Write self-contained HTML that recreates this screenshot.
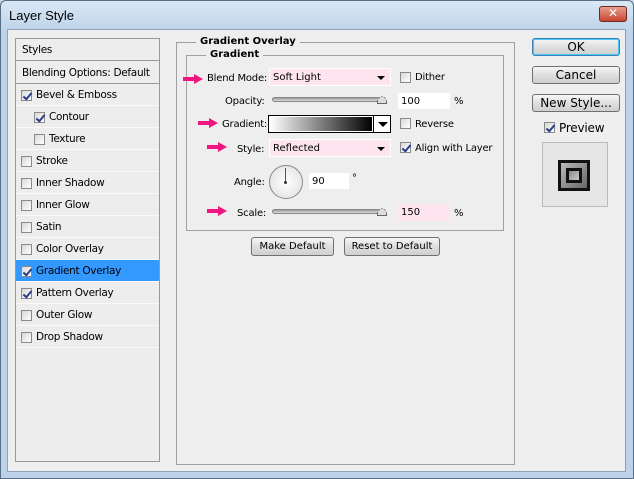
<!DOCTYPE html>
<html><head><style>
*{box-sizing:border-box;margin:0;padding:0}
body{width:634px;height:479px;overflow:hidden;font-family:Tahoma,"DejaVu Sans","Liberation Sans",sans-serif;font-size:11px;color:#000;background:#c4d8ea}
.win{position:absolute;left:0;top:0;width:634px;height:479px;background:linear-gradient(#dbe8f5,#bcd3ea 30px,#bcd3ea);border:1px solid #5a6f86;border-radius:6px 6px 0 0}
.title{position:absolute;left:8px;top:7px;font-size:13px;font-family:"Liberation Sans",sans-serif;color:#000}
.close{position:absolute;left:598px;top:5px;width:28px;height:16px;background:linear-gradient(#e8a08e,#c8452e);border:1px solid #6b2a20;border-radius:3px;color:#fff;font-weight:bold;text-align:center;line-height:13px;font-size:12px}
.content{position:absolute;left:7px;top:29px;width:619px;height:443px;background:#eeeeee;border:1px solid #8da2b9}
.abs{position:absolute}
.list{position:absolute;left:15px;top:38px;width:145px;height:424px;border:1px solid #999;background:#ededed}
.row{position:absolute;left:0;width:143px;height:22px;border-bottom:1px solid #fafafa;line-height:23px;font-size:10.5px;font-family:"DejaVu Sans",sans-serif;letter-spacing:-0.3px}
.cb{position:absolute;width:11px;height:11px;border:1px solid #8a8a8a;background:linear-gradient(135deg,#d8d8d8,#fff);top:6px}
.cb.on::after{content:"";position:absolute;left:3px;top:0px;width:3px;height:7px;border:solid #2a3c8a;border-width:0 2px 2px 0;transform:rotate(40deg)}
.sel{background:#3399ff}
.lbl{position:absolute;font-weight:bold;background:#eee;padding:0 4px;font-family:"DejaVu Sans",sans-serif;font-size:10px}
.t{position:absolute;font-family:"DejaVu Sans",sans-serif;font-size:10px;letter-spacing:-0.2px;margin-top:1px}
.pink{position:absolute;background:#fde4ee;border:1px solid #fff;height:18px;line-height:18px;padding-left:3px;font-family:"DejaVu Sans",sans-serif;font-size:10px}
.dd::after{content:"";position:absolute;right:5px;top:7px;border:4px solid transparent;border-top:4px solid #000;border-bottom:0}
.inp{position:absolute;background:#fff;height:16px;line-height:17px;padding-left:3px;font-family:"DejaVu Sans",sans-serif;font-size:10px}
.slider{position:absolute;height:5px;border:1px solid #888;border-radius:3px;background:linear-gradient(#999,#ddd)}
.thumb{position:absolute;width:10px;height:8px;background:#ddd;border:1px solid #666;clip-path:polygon(50% 0,100% 60%,100% 100%,0 100%,0 60%)}
.btn{position:absolute;border:1px solid #707070;border-radius:3px;background:linear-gradient(#f6f6f6,#dedede 50%,#d0d0d0);text-align:center;font-family:"DejaVu Sans",sans-serif;font-size:10px}
.arrow{position:absolute;width:20px;height:10px}
</style></head><body>
<div class="win">
<div class="title">Layer Style</div>
<div class="close">✕</div>
</div>
<div class="content"></div>

<div class="list">
 <div class="row" style="top:0;padding-left:6px;border-bottom:1px solid #999">Styles</div>
 <div class="row" style="top:23px;padding-left:6px;border-bottom:1px solid #999">Blending Options: Default</div>
 <div class="row" style="top:45px;padding-left:20px"><span class="cb on" style="left:5px"></span>Bevel &amp; Emboss</div>
 <div class="row" style="top:67px;padding-left:33px"><span class="cb on" style="left:18px"></span>Contour</div>
 <div class="row" style="top:89px;padding-left:33px"><span class="cb" style="left:18px"></span>Texture</div>
 <div class="row" style="top:111px;padding-left:20px"><span class="cb" style="left:5px"></span>Stroke</div>
 <div class="row" style="top:133px;padding-left:20px"><span class="cb" style="left:5px"></span>Inner Shadow</div>
 <div class="row" style="top:155px;padding-left:20px"><span class="cb" style="left:5px"></span>Inner Glow</div>
 <div class="row" style="top:177px;padding-left:20px"><span class="cb" style="left:5px"></span>Satin</div>
 <div class="row" style="top:199px;padding-left:20px"><span class="cb" style="left:5px"></span>Color Overlay</div>
 <div class="row sel" style="top:221px;padding-left:20px"><span class="cb on" style="left:5px"></span>Gradient Overlay</div>
 <div class="row" style="top:243px;padding-left:20px"><span class="cb on" style="left:5px"></span>Pattern Overlay</div>
 <div class="row" style="top:265px;padding-left:20px"><span class="cb" style="left:5px"></span>Outer Glow</div>
 <div class="row" style="top:287px;padding-left:20px"><span class="cb" style="left:5px"></span>Drop Shadow</div>
</div>

<div class="abs" style="left:176px;top:42px;width:339px;height:423px;border:1px solid #a0a0a0"></div>
<div class="lbl" style="left:196px;top:36px">Gradient Overlay</div>
<div class="abs" style="left:186px;top:55px;width:318px;height:176px;border:1px solid #a0a0a0"></div>
<div class="lbl" style="left:206px;top:49px">Gradient</div>

<svg class="arrow" style="left:183px;top:74px" viewBox="0 0 20 10"><path d="M0 3h11V0l9 5-9 5V7H0z" fill="#f0157f"/></svg>
<div class="t" style="left:207px;top:72px">Blend Mode:</div>
<div class="pink dd" style="left:269px;top:68px;width:122px">Soft Light</div>
<span class="cb" style="left:400px;top:72px"></span><div class="t" style="left:415px;top:71px">Dither</div>

<div class="t" style="left:225px;top:95px">Opacity:</div>
<div class="slider" style="left:272px;top:97px;width:114px"></div>
<div class="thumb" style="left:377px;top:96px"></div>
<div class="inp" style="left:398px;top:93px;width:52px">100</div><div class="t" style="left:454px;top:95px">%</div>

<svg class="arrow" style="left:198px;top:118px" viewBox="0 0 20 10"><path d="M0 3h11V0l9 5-9 5V7H0z" fill="#f0157f"/></svg>
<div class="t" style="left:222px;top:118px">Gradient:</div>
<div class="abs" style="left:268px;top:115px;width:123px;height:18px;border:1px solid #000;background:#fff"></div>
<div class="abs" style="left:270px;top:117px;width:102px;height:14px;background:linear-gradient(90deg,#fff,#000)"></div>
<div class="abs" style="left:373px;top:116px;width:1px;height:16px;background:#000"></div>
<div class="abs" style="left:378px;top:122px;border:5px solid transparent;border-top:5px solid #000;border-bottom:0"></div>
<span class="cb" style="left:400px;top:118px"></span><div class="t" style="left:415px;top:118px">Reverse</div>

<svg class="arrow" style="left:207px;top:142px" viewBox="0 0 20 10"><path d="M0 3h11V0l9 5-9 5V7H0z" fill="#f0157f"/></svg>
<div class="t" style="left:237px;top:143px">Style:</div>
<div class="pink dd" style="left:269px;top:139px;width:122px">Reflected</div>
<span class="cb on" style="left:400px;top:142px"></span><div class="t" style="left:415px;top:142px">Align with Layer</div>

<div class="t" style="left:234px;top:176px">Angle:</div>
<div class="abs" style="left:269px;top:165px;width:34px;height:34px;border-radius:50%;border:1px solid #888;background:radial-gradient(#fff,#ddd)"></div>
<div class="abs" style="left:285px;top:168px;width:1px;height:14px;background:#555"></div>
<div class="abs" style="left:284px;top:181px;width:3px;height:3px;border-radius:50%;background:#333"></div>
<div class="inp" style="left:309px;top:173px;width:40px">90</div><div class="t" style="left:352px;top:172px">°</div>

<svg class="arrow" style="left:207px;top:206px" viewBox="0 0 20 10"><path d="M0 3h11V0l9 5-9 5V7H0z" fill="#f0157f"/></svg>
<div class="t" style="left:237px;top:207px">Scale:</div>
<div class="slider" style="left:272px;top:209px;width:114px"></div>
<div class="thumb" style="left:377px;top:208px"></div>
<div class="pink" style="left:398px;top:204px;width:52px;height:17px;border:none;padding-left:3px">150</div><div class="t" style="left:454px;top:207px">%</div>

<div class="btn" style="left:251px;top:237px;width:83px;height:19px;line-height:18px">Make Default</div>
<div class="btn" style="left:344px;top:237px;width:96px;height:19px;line-height:18px">Reset to Default</div>

<div class="btn" style="left:532px;top:38px;width:88px;height:18px;line-height:17px;font-size:12px;border-color:#3c7fb1;box-shadow:inset 0 0 0 1px #48c6f4">OK</div>
<div class="btn" style="left:532px;top:66px;width:88px;height:18px;line-height:17px;font-size:12px">Cancel</div>
<div class="btn" style="left:532px;top:94px;width:88px;height:18px;line-height:17px;font-size:12px">New Style...</div>
<span class="cb on" style="left:544px;top:122px"></span><div class="t" style="left:559px;top:120px;font-size:12px">Preview</div>
<div class="abs" style="left:542px;top:142px;width:66px;height:65px;border:1px solid #bbb;background:#e6e6e6"></div>
<div class="abs" style="left:558px;top:160px;width:32px;height:31px;background:#111"></div>
<div class="abs" style="left:561px;top:163px;width:26px;height:25px;background:linear-gradient(135deg,#bbb,#666);"></div>
<div class="abs" style="left:566px;top:168px;width:16px;height:15px;background:#111"></div>
<div class="abs" style="left:569px;top:171px;width:10px;height:9px;background:linear-gradient(135deg,#888,#ccc)"></div>
</body></html>
